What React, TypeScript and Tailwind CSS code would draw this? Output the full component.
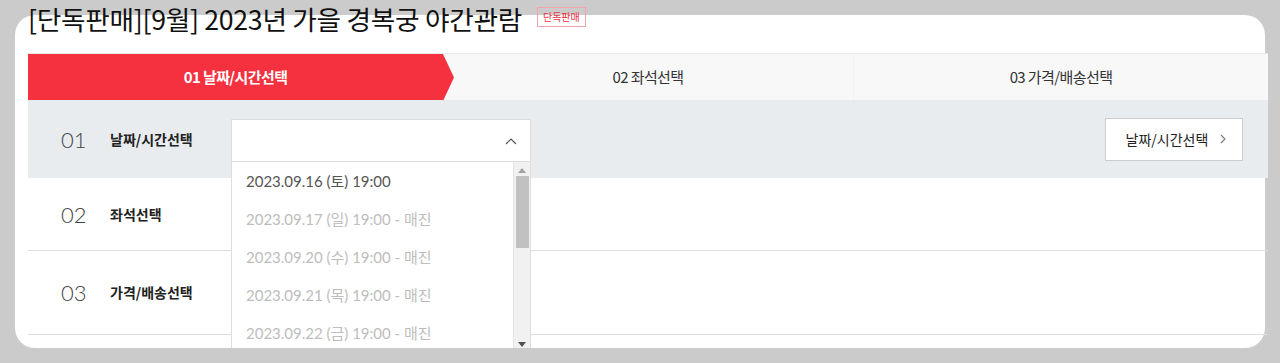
import React from 'react';

const FONT = "font-['Lato','Noto_Sans_CJK_KR',sans-serif]";

const dates = [
  { label: '2023.09.16 (토) 19:00', soldOut: false },
  { label: '2023.09.17 (일) 19:00 - 매진', soldOut: true },
  { label: '2023.09.20 (수) 19:00 - 매진', soldOut: true },
  { label: '2023.09.21 (목) 19:00 - 매진', soldOut: true },
  { label: '2023.09.22 (금) 19:00 - 매진', soldOut: true },
];

function StepRow({ num, label, className }: { num: string; label: string; className: string }) {
  return (
    <div className={`-mr-[3px] flex items-center pl-[33px] ${className}`}>
      <span className="w-[49px] text-[22px] font-light text-[#444]">{num}</span>
      <span className="w-[121px] font-['Noto_Sans_CJK_KR',sans-serif] text-[14px] font-bold text-[#222]">{label}</span>
    </div>
  );
}

export default function App() {
  return (
    <div className={`h-[363px] overflow-hidden bg-[#cbcbcb] px-[15px] pt-[15px] ${FONT}`}>
      <div className="relative flow-root rounded-[20px] bg-white pb-[13px] pl-[13px]">
        {/* title */}
        <div className="-mt-[15px] flex h-[38px] items-center gap-[15px]">
          <h1 className="font-['Noto_Sans_CJK_KR',sans-serif] text-[26.7px] leading-none tracking-[-0.3px] text-[#111]">
            [단독판매][9월] 2023년 가을 경복궁 야간관람
          </h1>
          <span className="mt-[-4px] border border-[#f3a3ab] px-[5px] py-[2px] font-['Noto_Sans_CJK_KR',sans-serif] text-[10px] leading-[14px] text-[#f0303f]">
            단독판매
          </span>
        </div>

        {/* stepper */}
        <div className="-mr-[3px] mt-[15px] flex h-[47px] border-t border-[#e8e8e8] bg-[#f8f8f8] font-['Noto_Sans_CJK_KR',sans-serif] text-[15px] tracking-[-0.6px]">
          <div className="relative flex w-[415px] items-center justify-center bg-[#f5303f] font-bold text-white">
            01 날짜/시간선택
            <svg className="absolute -right-[11px] top-0" width="11" height="47" viewBox="0 0 11 47">
              <polygon points="0,0 11,23.5 0,47" fill="#f5303f" />
            </svg>
          </div>
          <div className="flex w-[410px] items-center justify-center text-[#333]">02 좌석선택</div>
          <div className="flex flex-1 items-center justify-center border-l border-[#f2f2f2] text-[#333]">03 가격/배송선택</div>
        </div>

        {/* row 1 */}
        <div className="-mr-[3px] flex h-[78px] items-center bg-[#e9ecef] pl-[33px] pr-[25px]">
          <span className="w-[49px] text-[22px] font-light text-[#444]">01</span>
          <span className="w-[121px] font-['Noto_Sans_CJK_KR',sans-serif] text-[14px] font-bold text-[#222]">날짜/시간선택</span>
          <div className="mt-[3px] flex h-[43px] w-[300px] items-center justify-end border border-[#dddddd] bg-white pr-[13px]">
            <svg width="12" height="8" viewBox="0 0 12 8" fill="none" stroke="#555" strokeWidth="1.2">
              <polyline points="1,7 6,2 11,7" />
            </svg>
          </div>
          <button className="ml-auto flex h-[43px] w-[138px] items-center justify-center gap-[12px] border border-[#cccccc] bg-white pl-[4px] font-['Noto_Sans_CJK_KR',sans-serif] text-[14px] text-[#222]">
            날짜/시간선택
            <svg width="6" height="10" viewBox="0 0 6 10" fill="none" stroke="#777" strokeWidth="1.1">
              <polyline points="1,1 5,5 1,9" />
            </svg>
          </button>
        </div>

        <StepRow num="02" label="좌석선택" className="h-[73px] border-b border-[#dddddd]" />
        <StepRow num="03" label="가격/배송선택" className="h-[84px] border-b border-[#dddddd]" />

        {/* open dropdown list */}
        <div className="absolute left-[216px] top-[147px] z-10 flex h-[186px] w-[300px] border border-b-0 border-t-0 border-[#dddddd] bg-white">
          <ul className="flex-1">
            {dates.map((d) => (
              <li
                key={d.label}
                className={`flex h-[38px] items-center pl-[14px] text-[15px] ${d.soldOut ? 'text-[#bdbdbd]' : 'text-[#555]'}`}
              >
                {d.label}
              </li>
            ))}
          </ul>
          <div className="flex w-[17px] flex-col items-center border-l border-[#e4e4e4] bg-[#f1f1f1]">
            <svg className="mt-[6px]" width="8" height="5" viewBox="0 0 8 5">
              <polygon points="0,5 4,0 8,5" fill="#a3a3a3" />
            </svg>
            <div className="mt-[3px] h-[72px] w-[13px] bg-[#c1c1c1]" />
            <svg className="mb-[1px] mt-auto" width="8" height="5" viewBox="0 0 8 5">
              <polygon points="0,0 8,0 4,5" fill="#505050" />
            </svg>
          </div>
        </div>
      </div>
    </div>
  );
}
